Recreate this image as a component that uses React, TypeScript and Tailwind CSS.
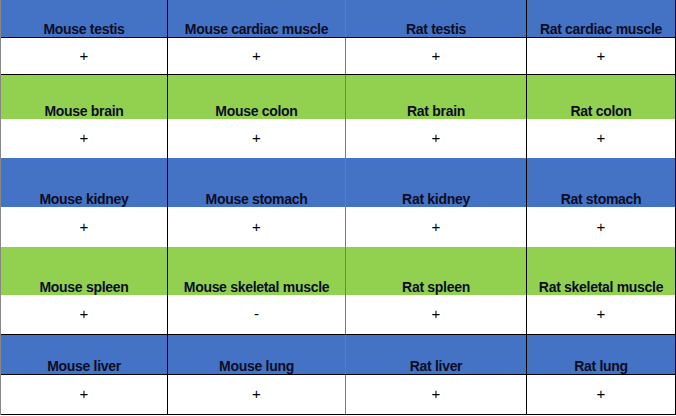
const ROWS = [
  { color: 'blue', h: 'h-[38px]', wh: 'h-[37px]', lineTop: true, lineBottom: true, names: ['Mouse testis', 'Mouse cardiac muscle', 'Rat testis', 'Rat cardiac muscle'], vals: ['+', '+', '+', '+'] },
  { color: 'green', h: 'h-[44px]', wh: 'h-[39px]', lineTop: false, lineBottom: false, names: ['Mouse brain', 'Mouse colon', 'Rat brain', 'Rat colon'], vals: ['+', '+', '+', '+'] },
  { color: 'blue', h: 'h-[49px]', wh: 'h-[40px]', lineTop: false, lineBottom: false, names: ['Mouse kidney', 'Mouse stomach', 'Rat kidney', 'Rat stomach'], vals: ['+', '+', '+', '+'] },
  { color: 'green', h: 'h-[48px]', wh: 'h-[40px]', lineTop: false, lineBottom: true, names: ['Mouse spleen', 'Mouse skeletal muscle', 'Rat spleen', 'Rat skeletal muscle'], vals: ['+', '-', '+', '+'] },
  { color: 'blue', h: 'h-[40px]', wh: 'h-[40px]', lineTop: true, lineBottom: true, names: ['Mouse liver', 'Mouse lung', 'Rat liver', 'Rat lung'], vals: ['+', '+', '+', '+'] },
]

const COL_BORDER = ['', 'border-l border-black', 'border-l border-[#7a7a7a]', 'border-l border-black']

export default function App() {
  return (
    <div
      className="w-[676px] h-[416px] bg-white overflow-hidden"
      style={{ fontFamily: '"Liberation Sans", Arial, sans-serif' }}
    >
      <div className="w-[676px] border-l border-[#888] border-r border-r-black">
        {ROWS.map((r, i) => (
          <div key={i}>
            {/* 見出し行 */}
            <div
              className={`grid grid-cols-[166px_178px_181px_149px] ${r.h} ${r.color === 'blue' ? 'bg-[#4472c4]' : 'bg-[#92d050]'} ${r.lineTop ? 'border-b border-black' : ''}`}
            >
              {r.names.map((n, j) => (
                <div
                  key={n}
                  className={`flex items-end justify-center pb-[1px] text-[14px] font-bold tracking-[-0.3px] text-[#0d0d26] leading-[14px] ${COL_BORDER[j]}`}
                >
                  {n}
                </div>
              ))}
            </div>
            {/* 値の行 */}
            <div
              className={`grid grid-cols-[166px_178px_181px_149px] ${r.wh} bg-white ${r.lineBottom ? 'border-b border-black' : ''}`}
            >
              {r.vals.map((v, j) => (
                <div
                  key={j}
                  className={`flex items-center justify-center text-[15px] font-normal text-black ${COL_BORDER[j]}`}
                >
                  {v}
                </div>
              ))}
            </div>
          </div>
        ))}
      </div>
    </div>
  )
}
